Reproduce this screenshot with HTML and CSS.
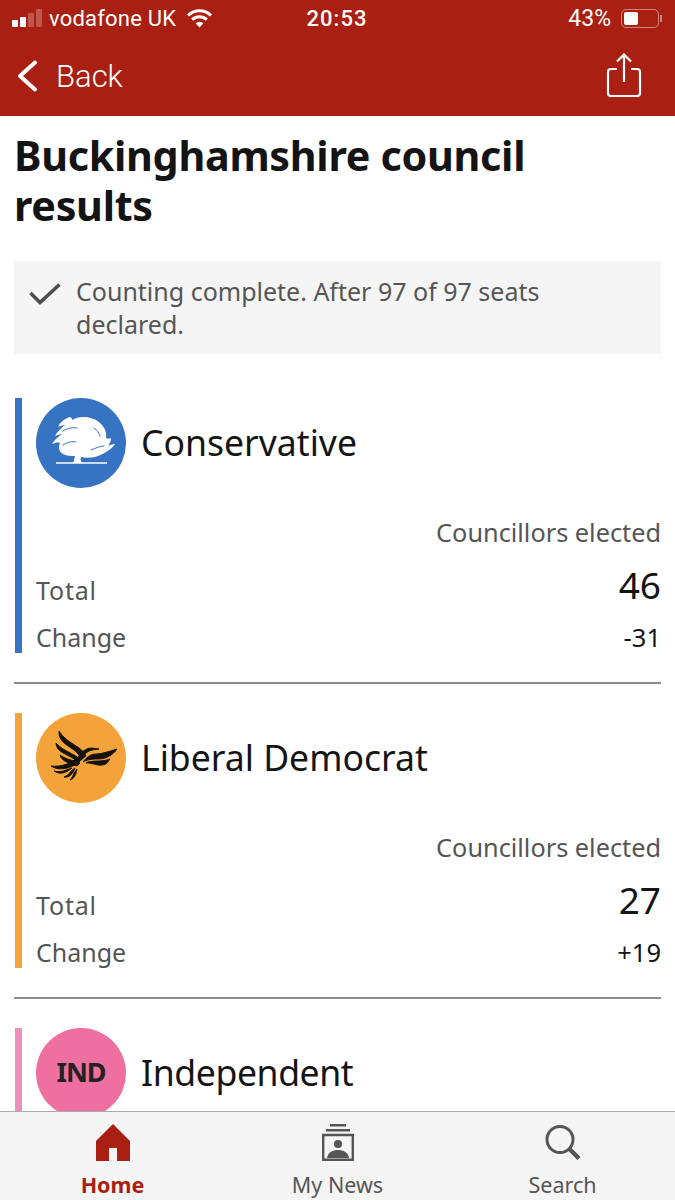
FILE: index.html
```html
<!DOCTYPE html>
<html lang="en">
<head>
    <meta charset="UTF-8">
    <meta name="viewport" content="width=device-width, initial-scale=1.0">
    <title>Buckinghamshire council results</title>
    <link rel="stylesheet" href="styles.css">
</head>
<body>
    <div class="app">
        <header class="top">
            <div class="status">
                <div class="status-left">
                    <div class="signal"><i class="on"></i><i class="on"></i><i></i><i></i></div>
                    <span class="carrier">vodafone UK</span>
                    <svg class="wifi" viewBox="0 0 25 19"><path d="M1 6.500a16.500 16.500 0 0 1 23 0" fill="none" stroke="#fff" stroke-width="3"/><path d="M5.200 10.600a10.600 10.600 0 0 1 14.600 0" fill="none" stroke="#fff" stroke-width="3"/><path d="M12.500 18.500 8.600 14.300a5.600 5.600 0 0 1 7.800 0z" fill="#fff"/></svg>
                </div>
                <span class="clock">20:53</span>
                <div class="status-right">
                    <span class="percent">43%</span>
                    <div class="battery"><div class="battery-level"></div></div>
                    <div class="battery-tip"></div>
                </div>
            </div>
            <nav class="nav">
                <div class="back">
                    <svg class="chevron" viewBox="0 0 22 32"><path d="M19 2.500 4 16l15 13.500" fill="none" stroke="#fff" stroke-width="4" stroke-linecap="round" stroke-linejoin="round"/></svg>
                    <span>Back</span>
                </div>
                <svg class="share" viewBox="0 0 36 44"><path d="M11 16H5a3 3 0 0 0-3 3v21a3 3 0 0 0 3 3h26a3 3 0 0 0 3-3V19a3 3 0 0 0-3-3h-6" fill="none" stroke="#fff" stroke-width="2.200"/><path d="M18 29V2M11 8.500 18 1.500l7 7" fill="none" stroke="#fff" stroke-width="2.200"/></svg>
            </nav>
        </header>

        <main class="content">
            <h1 class="title">Buckinghamshire council results</h1>

            <div class="notice">
                <svg class="tick" viewBox="0 0 32 22"><path d="M1.500 10 11 19.500 30.500 1.500" fill="none" stroke="#4c4c4c" stroke-width="3.500"/></svg>
                <p>Counting complete. After 97 of 97 seats declared.</p>
            </div>

            <section class="party party-con">
                <div class="party-head">
                    <svg class="logo" viewBox="0 0 90 90">
                        <circle cx="45" cy="45" r="45" fill="#3673c3"/>
                        <path d="M34 19C28 21 24 24 22 29C24 28 27 27 29 27C25 30 21 34 19 38C22 37 24 36 26 36C22 39 18 42 16 46C19 45 22 44 24 45C22 49 23 54 27 56C31 58 35 58 39 58L38 62C38 64 37 65 35 65H46C45 63 44 62 45 59C50 60 57 60 62 58C67 56 75 52 79 46C76 46 74 47 72 48C74 45 75 43 75 40C73 41 71 41 70 40C71 35 69 30 65 26C60 21 54 19 48 19C43 19 39 20 36 22C36 21 36 20 34 19Z" fill="#fff"/>
                        <g fill="none" stroke="#3673c3" stroke-width="1" stroke-linecap="round">
                            <path d="M27 33C32 30 37 29 41 30"/>
                            <path d="M27 47C32 44 36 43 40 44"/>
                            <path d="M55 52C60 50 64 48 68 48"/>
                            <path d="M58 30C61 32 63 35 64 38"/>
                        </g>
                        <path d="M20 65H71" stroke="#fff" stroke-width="1.500"/>
                    </svg>
                    <h2>Conservative</h2>
                </div>
                <div class="caption">Councillors elected</div>
                <div class="row row-total"><span>Total</span><strong>46</strong></div>
                <div class="row row-change"><span>Change</span><strong>-31</strong></div>
            </section>

            <section class="party party-lib">
                <div class="party-head">
                    <svg class="logo" viewBox="0 0 90 90">
                        <circle cx="45" cy="45" r="45" fill="#f4a23a"/>
                        <g fill="#14110c" stroke="#14110c" stroke-width="0.900" stroke-linejoin="round">
                            <path d="M23 18C22 28 31 32 38 37C42 40 44 43 45 47L50 43C46 33 31 31 23 18Z"/>
                            <path d="M20 30C20 39 31 41 38 46L42 50L45 47C38 40 28 39 20 30Z"/>
                            <path d="M24 42C26 49 34 50 41 53L44 50C37 47 31 47 24 42Z"/>
                            <path d="M15 53C22 58 34 56 42 50C46 46 48 39 56 37L63 36L56 35C48 35 45 41 41 45C34 51 25 54 15 53Z"/>
                            <path d="M81 36C74 38 66 41 60 41C54 41 50 45 47 49C53 46 58 46 63 46C70 46 77 42 81 36Z"/>
                            <path d="M74 46C68 49 60 47 52 49L50 50C58 50 61 53 66 52C70 52 72 49 74 46Z"/>
                            <path d="M18 58C24 62 30 60 36 55L30 57C26 59 22 59 18 58Z"/>
                            <path d="M28 64C33 65 37 61 39 55L35 58C33 61 31 63 28 64Z"/>
                            <path d="M34 67C38 66 40 62 41 56L38 60C37 63 36 65 34 67Z"/>
                        </g>
                    </svg>
                    <h2>Liberal Democrat</h2>
                </div>
                <div class="caption">Councillors elected</div>
                <div class="row row-total"><span>Total</span><strong>27</strong></div>
                <div class="row row-change"><span>Change</span><strong>+19</strong></div>
            </section>

            <section class="party party-ind">
                <div class="party-head">
                    <div class="logo logo-ind">IND</div>
                    <h2>Independent</h2>
                </div>
            </section>
        </main>

        <footer class="tabs">
            <div class="tab tab-active">
                <svg class="tab-icon" viewBox="0 0 34 37"><path d="M17 0 34 17V37H21V24H13V37H0V17Z" fill="#a91f12"/></svg>
                <span>Home</span>
            </div>
            <div class="tab">
                <svg class="tab-icon" viewBox="0 0 32 37"><path d="M8 0H24V2.500H8ZM4 5H28V7.500H4Z" fill="#555"/><path d="M1.200 11H30.800V35.800H1.200Z" fill="none" stroke="#555" stroke-width="2.400"/><circle cx="16" cy="20" r="4" fill="#555"/><path d="M5 34C6 28 11 26 16 26S26 28 27 34Z" fill="#555"/></svg>
                <span>My News</span>
            </div>
            <div class="tab">
                <svg class="tab-icon" viewBox="0 0 36 36"><circle cx="15" cy="15" r="13" fill="none" stroke="#555" stroke-width="3"/><path d="M24 24 34 34" stroke="#555" stroke-width="4.500"/></svg>
                <span>Search</span>
            </div>
        </footer>
    </div>
</body>
</html>
```

FILE: styles.css
```css
* {
    box-sizing: border-box;
}
html,
body {
    margin: 0;
    background: #fff;
}
.app {
    width: 675px;
    height: 1200px;
    display: flex;
    flex-direction: column;
    overflow: hidden;
    font-family: "Noto Sans", sans-serif;
}

.top {
    height: 116px;
    flex: none;
    background: #a91f12;
    color: #fff;
    font-family: Roboto, sans-serif;
}
.status {
    height: 36px;
    padding: 0 13px 0 12px;
    display: grid;
    grid-template-columns: 1fr auto 1fr;
    align-items: center;
    font-size: 22px;
}
.status-left,
.status-right {
    display: flex;
    align-items: center;
}
.status-right {
    justify-content: flex-end;
}
.signal {
    display: flex;
    align-items: flex-end;
    gap: 2px;
    height: 18px;
    margin-right: 7px;
}
.signal i {
    display: block;
    width: 6px;
    background: rgba(255, 255, 255, 0.25);
    border-radius: 1px;
}
.signal i:nth-child(1) { height: 7px; }
.signal i:nth-child(2) { height: 10px; }
.signal i:nth-child(3) { height: 14px; }
.signal i:nth-child(4) { height: 18px; }
.signal i.on {
    background: #fff;
}
.carrier {
    letter-spacing: 0.2px;
}
.wifi {
    width: 25px;
    height: 19px;
    margin-left: 11px;
}
.clock {
    font-weight: 500;
    letter-spacing: 1px;
}
.percent {
    margin-right: 10px;
    font-size: 23px;
}
.battery {
    width: 38px;
    height: 19px;
    border: 1.5px solid rgba(255, 255, 255, 0.45);
    border-radius: 5px;
    padding: 2px;
}
.battery-level {
    width: 14px;
    height: 100%;
    background: #fff;
    border-radius: 2px;
}
.battery-tip {
    width: 2px;
    height: 7px;
    margin-left: 1px;
    background: rgba(255, 255, 255, 0.45);
}
.nav {
    height: 80px;
    padding: 0 33px 0 16px;
    display: flex;
    align-items: center;
    justify-content: space-between;
}
.back {
    display: flex;
    align-items: center;
    gap: 18px;
    font-size: 31px;
    font-weight: 300;
}
.chevron {
    width: 22px;
    height: 36px;
}
.share {
    width: 36px;
    height: 44px;
    margin-top: -2px;
}

.content {
    flex: 1;
    min-height: 0;
    overflow: hidden;
    padding: 14px 14px 0 14px;
}
.title {
    margin: 0;
    font-size: 41.3px;
    line-height: 50px;
    font-weight: 700;
    color: #141414;
    letter-spacing: -0.3px;
}
.notice {
    margin-top: 31px;
    height: 93px;
    background: #f5f5f5;
    padding: 14px 30px 0 15px;
    display: flex;
    align-items: flex-start;
    color: #555;
}
.notice p {
    margin: 0;
    font-size: 25px;
    line-height: 33px;
}
.tick {
    width: 32px;
    height: 22px;
    margin: 8px 15px 0 0;
    flex: none;
}

.party {
    border-left: 7px solid #3673c3;
    margin-left: 1px;
    padding-left: 14px;
    height: 255px;
    position: relative;
}
.party-con {
    margin-top: 44px;
}
.party-lib {
    border-left-color: #f4a23a;
    margin-top: 60px;
}
.party-ind {
    border-left-color: #ec8fbd;
    margin-top: 60px;
}
.party-lib::before,
.party-ind::before {
    content: "";
    display: block;
    position: absolute;
    top: -31px;
    left: -8px;
    right: 0;
    border-top: 2px solid #8c8c8c;
}
.party-head {
    display: flex;
    align-items: center;
    gap: 15px;
}
.party-head h2 {
    margin: 0 0 3px;
    font-size: 35.6px;
    font-weight: 400;
    color: #141414;
}
.party-ind h2 {
    letter-spacing: -0.4px;
}
.logo {
    width: 90px;
    height: 90px;
    flex: none;
}
.logo-ind {
    border-radius: 50%;
    background: #ee6fa0;
    color: #222;
    font-size: 27px;
    font-weight: 700;
    display: flex;
    align-items: center;
    justify-content: center;
    letter-spacing: -1px;
    padding-bottom: 3px;
}
.caption {
    margin-top: 27px;
    text-align: right;
    font-size: 25.3px;
    line-height: 34px;
    color: #555;
}
.row {
    display: flex;
    justify-content: space-between;
    color: #555;
    font-size: 25px;
}
.row strong {
    font-weight: 400;
    color: #141414;
}
.row-total {
    margin-top: 11px;
    height: 47px;
    align-items: flex-end;
}
.row-total span {
    letter-spacing: 0.8px;
}
.row-total strong {
    font-size: 37px;
    align-self: flex-start;
    line-height: 50px;
}
.row-change {
    margin-top: 13px;
    height: 34px;
    align-items: center;
}
.row-change strong {
    font-size: 25.5px;
}

.tabs {
    height: 89px;
    flex: none;
    background: #f5f5f5;
    border-top: 1px solid #ababab;
    display: grid;
    grid-template-columns: repeat(3, 1fr);
}
.tab {
    display: flex;
    flex-direction: column;
    align-items: center;
    padding-top: 12px;
    color: #555;
    font-size: 21.5px;
    line-height: 30px;
}
.tab-active {
    color: #a91f12;
    font-weight: 700;
}
.tab-icon {
    width: 36px;
    height: 37px;
    margin-bottom: 9px;
}
```
